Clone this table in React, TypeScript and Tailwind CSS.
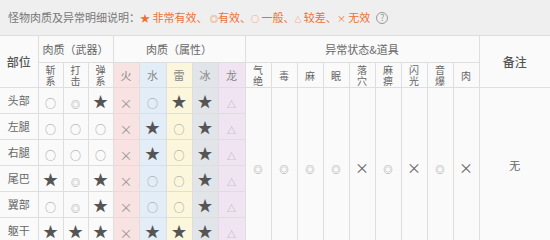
import React from 'react';

const weaponCols = ['斩系', '打击', '弹系'];
const elementCols = [
  { name: '火', bg: 'bg-[#f9e2e2]' },
  { name: '水', bg: 'bg-[#e2edf8]' },
  { name: '雷', bg: 'bg-[#fcf6dc]' },
  { name: '冰', bg: 'bg-[#e1e4e8]' },
  { name: '龙', bg: 'bg-[#f0e4f3]' },
];
const statusCols = [
  { name: '气绝', v: '◎' },
  { name: '毒', v: '◎' },
  { name: '麻', v: '◎' },
  { name: '眠', v: '◎' },
  { name: '落穴', v: '×' },
  { name: '麻痹', v: '◎' },
  { name: '闪光', v: '×' },
  { name: '音爆', v: '◎' },
  { name: '肉', v: '×' },
];

const rows = [
  { part: '头部', w: ['○', '◎', '★'], e: ['×', '○', '★', '★', '△'] },
  { part: '左腿', w: ['○', '○', '○'], e: ['×', '★', '○', '★', '△'] },
  { part: '右腿', w: ['○', '○', '○'], e: ['×', '★', '○', '★', '△'] },
  { part: '尾巴', w: ['★', '◎', '★'], e: ['×', '○', '○', '★', '△'] },
  { part: '翼部', w: ['○', '◎', '★'], e: ['×', '○', '○', '★', '△'] },
  { part: '躯干', w: ['★', '★', '★'], e: ['×', '★', '★', '★', '△'] },
];

function Mark({ v, dark }: { v: string; dark?: boolean }) {
  if (v === '★') return <span className="text-[15px] text-[#555]">★</span>;
  if (v === '◎') return <span className="text-[9px] text-[#888]">◎</span>;
  if (v === '△') return <span className="text-[9px] text-[#aaa]">△</span>;
  if (v === '×')
    return <span className={dark ? 'text-[14px] text-[#666]' : 'text-[13px] text-[#999]'}>×</span>;
  return <span className="text-[11px] text-[#999]">○</span>;
}

function Stacked({ text }: { text: string }) {
  return (
    <div className="flex flex-col items-center leading-[11px] text-[10px]">
      {text.split('').map((c, i) => (
        <span key={i}>{c}</span>
      ))}
    </div>
  );
}

const cell = 'border border-[#dedede] text-center align-middle p-0';

export default function App() {
  return (
    <div className="w-[550px] bg-white text-[#666]" style={{ fontFamily: '"Noto Sans CJK SC", "Noto Sans", sans-serif' }}>
      <div className="h-[35px] bg-[#efefef] flex items-center pl-2 text-[11px]">
        <span className="text-[#777]">怪物肉质及异常明细说明：</span>
        <span className="text-[#f07030]">
          <span className="text-[10px]">★</span> 非常有效、 <span className="text-[8px]">◎</span>有效、<span className="text-[8px]">○</span> 一般、<span className="text-[7px]">△</span> 较差、<span className="text-[9px]">×</span> 无效
        </span>
        <span className="ml-1.5 w-[12px] h-[12px] rounded-full border border-[#999] text-[#999] text-[9px] leading-none flex items-center justify-center">?</span>
      </div>
      <table className="w-[550px] table-fixed border-collapse bg-[#fafafa]">
        <colgroup>
          <col className="w-[38px]" />
          <col className="w-[25px]" />
          <col className="w-[25px]" />
          <col className="w-[25px]" />
          <col className="w-[26px]" />
          <col className="w-[27px]" />
          <col className="w-[26px]" />
          <col className="w-[26px]" />
          <col className="w-[27px]" />
          {statusCols.map((c) => (
            <col key={c.name} className="w-[26px]" />
          ))}
          <col />
        </colgroup>
        <thead>
          <tr className="h-[27px] text-[11px]">
            <th rowSpan={2} className={`${cell} font-medium text-[#555] text-[12px] border-l-0`}>部位</th>
            <th colSpan={3} className={`${cell} font-normal`}>肉质（武器）</th>
            <th colSpan={5} className={`${cell} font-normal`}>肉质（属性）</th>
            <th colSpan={9} className={`${cell} font-normal`}>异常状态&amp;道具</th>
            <th rowSpan={2} className={`${cell} font-medium text-[#555] text-[12px] border-r-0`}>备注</th>
          </tr>
          <tr className="h-[25px] text-[11px]">
            {weaponCols.map((c) => (
              <th key={c} className={`${cell} font-normal`}>
                <Stacked text={c} />
              </th>
            ))}
            {elementCols.map((c) => (
              <th key={c.name} className={`${cell} ${c.bg} font-normal text-[#888]`}>{c.name}</th>
            ))}
            {statusCols.map((c) => (
              <th key={c.name} className={`${cell} font-normal`}>
                <Stacked text={c.name} />
              </th>
            ))}
          </tr>
        </thead>
        <tbody>
          {rows.map((r, i) => (
            <tr key={r.part} className="h-[26px]">
              <td className={`${cell} text-[11px] border-l-0`}>{r.part}</td>
              {r.w.map((v, j) => (
                <td key={j} className={cell}>
                  <Mark v={v} />
                </td>
              ))}
              {r.e.map((v, j) => (
                <td key={j} className={`${cell} ${elementCols[j].bg}`}>
                  <Mark v={v} />
                </td>
              ))}
              {i === 0 &&
                statusCols.map((c) => (
                  <td key={c.name} rowSpan={6} className={cell}>
                    <Mark v={c.v} dark />
                  </td>
                ))}
              {i === 0 && (
                <td rowSpan={6} className={`${cell} text-[11px] border-r-0`}>无</td>
              )}
            </tr>
          ))}
        </tbody>
      </table>
    </div>
  );
}
